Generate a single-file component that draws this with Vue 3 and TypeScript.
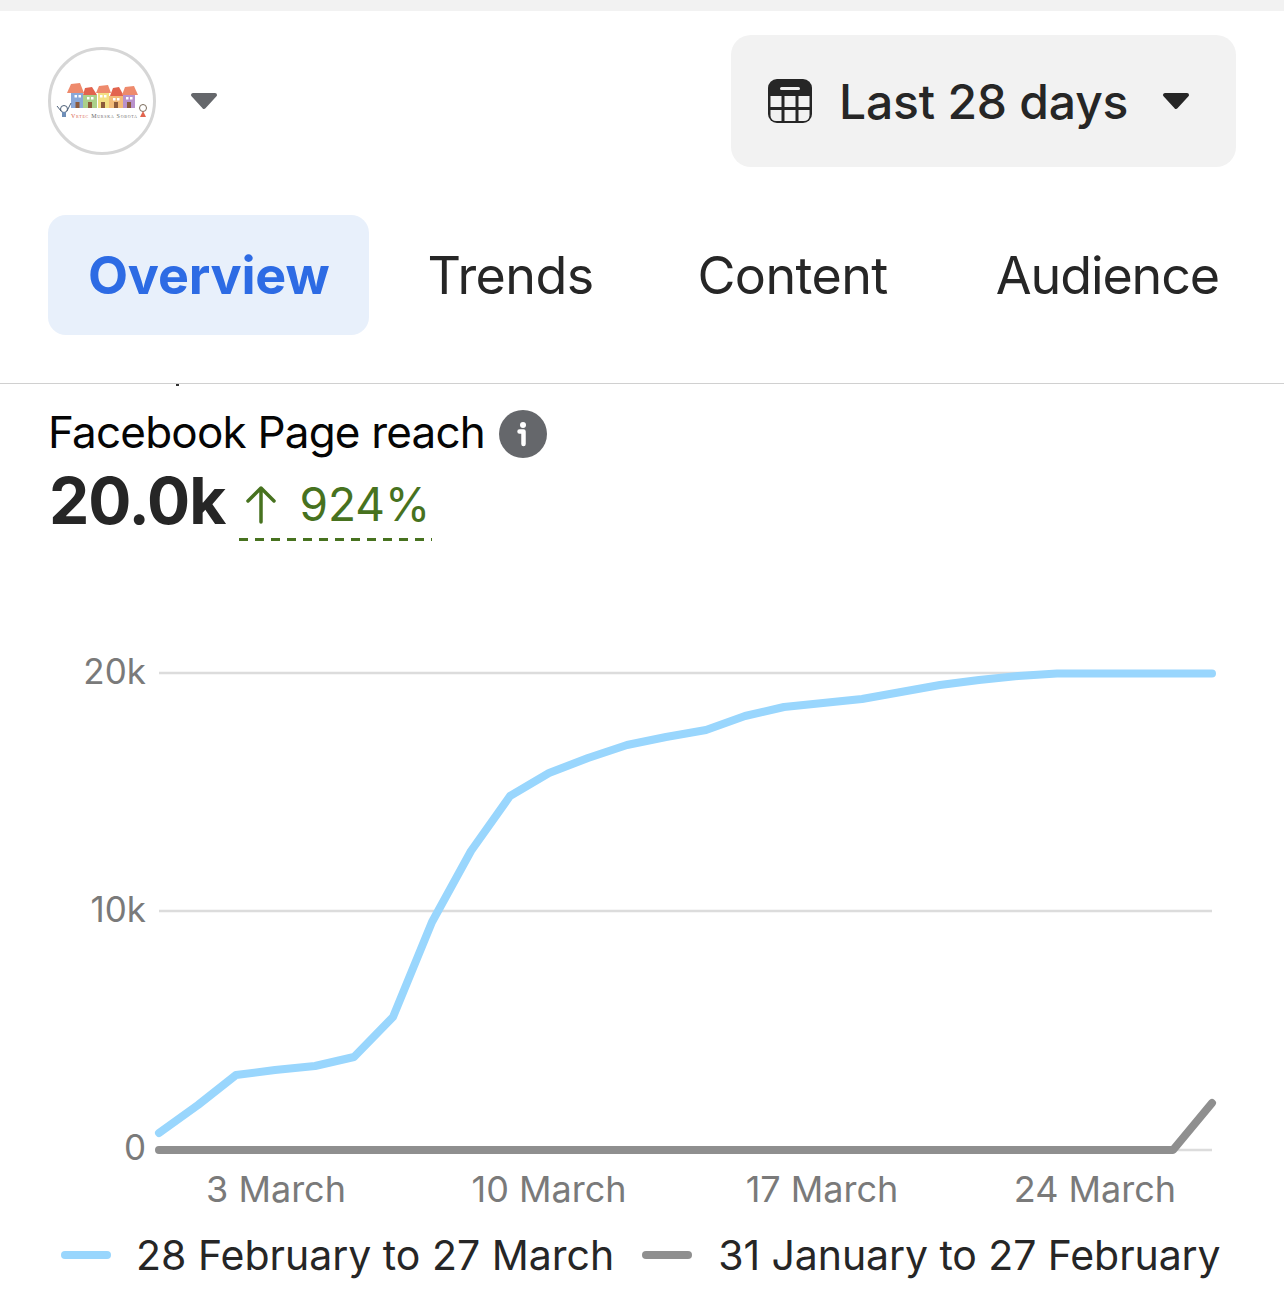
<script setup lang="ts">
const blue: [number, number][] = [[159,1133],[198,1105],[236,1075],[275,1070],[315,1066],[354,1057],[393,1017],[432,922],[471,851],[510,796],[549,773],[588,758],[627,745],[666,737],[706,730],[745,716],[784,707],[823,703],[862,699],[901,692],[940,685],[979,680],[1018,676],[1057,673.5],[1212,673.5]]
const gray: [number, number][] = [[159,1150],[1173,1150],[1212,1103]]
const top = 560
const pts = (p: [number, number][]) => p.map(([x, y]) => `${x},${y - top}`).join(' ')
const grid = [673, 911, 1150].map((y) => y - top)
const yLabels = [{ t: '20k', y: 684 - top }, { t: '10k', y: 922 - top }, { t: '0', y: 1160 - top }]
const xLabels = [{ t: '3 March', x: 276 }, { t: '10 March', x: 549 }, { t: '17 March', x: 822 }, { t: '24 March', x: 1095 }]
const tabs = ['Overview', 'Trends', 'Content', 'Audience']
const houses = [
  { roof: 'M67 93 L71 84 L80 83 L84 93Z', roofFill: '#ee8a6c', x: 71, y: 93, w: 12, h: 15, fill: '#8aa8d8', door: 75.500 },
  { roof: 'M83 95 L85 88 L92 87 L97 95Z', roofFill: '#e2644e', x: 83, y: 95, w: 14, h: 13, fill: '#abd08a', door: 88 },
  { roof: 'M96 93 L99 86 L108 85 L111 93Z', roofFill: '#ee8a6c', x: 98, y: 93, w: 11, h: 15, fill: '#f3df84', door: 101 },
  { roof: 'M110 96 L113 88 L119 87 L124 96Z', roofFill: '#e2644e', x: 109, y: 96, w: 14, h: 12, fill: '#f3bb78', door: 114 },
  { roof: 'M122 95 L125 87 L134 86 L138 95Z', roofFill: '#ee8a6c', x: 123, y: 95, w: 12, h: 13, fill: '#b892cc', door: 127 },
]
</script>

<template>
  <div class="page">
    <div class="topbar"></div>
    <header class="head">
      <div class="page-pick">
        <svg class="avatar" width="108" height="108" viewBox="48 47 108 108">
          <circle cx="102" cy="101" r="52.500" fill="#fff" stroke="#d6d6d6" stroke-width="3" />
          <g class="logo-art">
            <g v-for="h in houses" :key="h.x">
              <rect :x="h.x" :y="h.y" :width="h.w" :height="h.h" :fill="h.fill" />
              <path :d="h.roof" :fill="h.roofFill" />
              <rect :x="h.door" y="102" width="4" height="6" fill="#8c5a3a" />
              <rect :x="h.door - 1" :y="h.y + 2" width="2.500" height="2.500" fill="#fff" />
              <rect :x="h.door + 3" :y="h.y + 2" width="2.500" height="2.500" fill="#fff" />
            </g>
            <circle cx="64" cy="109" r="3.500" fill="#fff" stroke="#4c5f78" />
            <path d="M57 106 L61 111 M71 103 L67 111" stroke="#4c5f78" fill="none" />
            <rect x="62" y="112" width="4" height="5" fill="#6f8fb8" />
            <circle cx="143" cy="108" r="3.500" fill="#fff" stroke="#7a6a5a" />
            <path d="M143 111 L140 117 L146 117Z" fill="#e2644e" />
          </g>
          <text x="71" y="118" textLength="66" class="logo-text"><tspan fill="#d9604a">Vrtec</tspan> Murska Sobota</text>
        </svg>
        <svg class="caret" width="28" height="18" viewBox="0 0 28 18"><path d="M3 3h22L14 15Z" fill="#65676b" stroke="#65676b" stroke-width="4" stroke-linejoin="round" /></svg>
      </div>
      <button class="range">
        <svg width="46" height="46" viewBox="0 0 46 46">
          <rect x="1" y="1" width="44" height="44" rx="9" fill="#262626" />
          <rect x="13" y="9" width="20" height="3" rx="1.500" fill="#f2f2f2" />
          <g fill="#f2f2f2">
            <rect x="3.500" y="18" width="11" height="11" />
            <rect x="17.500" y="18" width="11" height="11" />
            <rect x="31.500" y="18" width="11" height="11" />
            <path d="M3.500 32h11v11H9a5.500 5.500 0 0 1-5.500-5.500Z" />
            <rect x="17.500" y="32" width="11" height="11" />
            <path d="M31.500 32h11v5.500a5.500 5.500 0 0 1-5.500 5.500h-5.500Z" />
          </g>
        </svg>
        <span class="range-text">Last 28 days</span>
        <svg class="range-caret" width="28" height="18" viewBox="0 0 28 18"><path d="M3 3h22L14 15Z" fill="#262626" stroke="#262626" stroke-width="4" stroke-linejoin="round" /></svg>
      </button>
    </header>

    <nav class="tabs">
      <div v-for="(t, i) in tabs" :key="t" class="tab" :class="{ active: i === 0 }">{{ t }}</div>
    </nav>

    <section class="body">
      <span class="speck"></span>
      <h2 class="title">Facebook Page reach
        <svg width="48" height="48" viewBox="0 0 48 48"><circle cx="24" cy="24" r="24" fill="#65676b" /><circle cx="24" cy="15" r="3" fill="#fff" /><path d="M20.500 21.500H24.500V34" fill="none" stroke="#fff" stroke-width="4.500" stroke-linecap="round" stroke-linejoin="round" /></svg>
      </h2>
      <div class="metric">
        <span class="value">20.0k</span>
        <span class="delta">
          <svg width="32" height="40" viewBox="0 0 32 40"><path d="M16 38V4M3 17 16 4l13 13" fill="none" stroke="#47721f" stroke-width="3.500" stroke-linecap="round" stroke-linejoin="round" /></svg>
          <span>924%</span>
        </span>
      </div>

      <svg class="chart" width="1284" height="660" viewBox="0 0 1284 660">
        <line v-for="y in grid" :key="y" x1="159" x2="1212" :y1="y" :y2="y" class="gridline" />
        <text v-for="l in yLabels" :key="l.t" x="146" :y="l.y" text-anchor="end" class="axis axis-y">{{ l.t }}</text>
        <text v-for="l in xLabels" :key="l.t" :x="l.x" y="642" text-anchor="middle" class="axis">{{ l.t }}</text>
        <polyline :points="pts(blue)" class="series blue" />
        <polyline :points="pts(gray)" class="series gray" />
      </svg>

      <div class="legend">
        <span class="swatch swatch-blue"></span><span class="legend-label">28 February to 27 March</span>
        <span class="swatch swatch-gray"></span><span class="legend-label second">31 January to 27 February</span>
      </div>
    </section>
  </div>
</template>

<style>
html, body { margin: 0; background: #fff; }
</style>

<style scoped>
.page { width: 1284px; height: 1306px; overflow: hidden; background: #fff; font-family: Inter, "Liberation Sans", sans-serif; color: #262626; }
.topbar { height: 11px; background: #f2f2f2; }
.head { display: flex; justify-content: space-between; align-items: center; padding: 24px 48px 48px; }
.page-pick { display: flex; align-items: center; gap: 34px; }
.avatar { display: block; }
.logo-art { filter: blur(0.4px); }
.logo-text { font-size: 6px; fill: #6a6a6a; font-family: "Liberation Serif", serif; font-variant: small-caps; }
.caret { display: block; }
.range { width: 505px; height: 132px; border: 0; border-radius: 20px; background: #f2f2f2; display: flex; align-items: center; padding: 0 46px 0 36px; box-sizing: border-box; font: inherit; color: inherit; }
.range-text { font-size: 48px; font-weight: 500; margin-left: 26px; letter-spacing: -0.2px; }
.range-caret { margin-left: auto; }
.tabs { display: flex; align-items: center; gap: 18px; height: 120px; padding: 0 0 48px 48px; border-bottom: 1px solid #d0d0d0; }
.tab { font-size: 52px; height: 120px; line-height: 122px; padding: 0 43px; border-radius: 18px; letter-spacing: -0.6px; white-space: nowrap; }
.tab:last-child { margin-left: 4px; letter-spacing: -1.1px; }
.tab.active { background: #e8f0fb; color: #2d6be4; font-weight: 700; padding: 0 40px; margin-right: -3px; letter-spacing: -0.2px; }
.body { position: relative; padding-top: 22px; }
.speck { position: absolute; left: 176px; top: 0; width: 3px; height: 2px; background: #333; }
.title { margin: 0; padding-left: 48px; display: flex; align-items: center; gap: 14px; font-size: 44px; line-height: 53px; font-weight: 400; color: #050505; letter-spacing: -0.8px; }
.title svg { margin-top: 2px; }
.metric { display: flex; align-items: baseline; padding-left: 49px; }
.value { font-size: 64px; font-weight: 700; line-height: 84px; letter-spacing: -1px; }
.delta { display: inline-flex; align-items: center; gap: 22px; margin-left: 14px; padding: 0 2px 9px 6px; color: #47721f; font-size: 46px; background: repeating-linear-gradient(90deg, #47721f 0 9px, transparent 9px 16px) left bottom / 100% 3px no-repeat; }
.chart { display: block; margin-top: 17px; }
.gridline { stroke: #dcdcdc; stroke-width: 2.500; }
.axis { font-size: 36px; fill: #7a7a7a; }
.axis-y { font-size: 35px; }
.series { fill: none; stroke-width: 8; stroke-linecap: round; stroke-linejoin: round; }
.blue { stroke: #99d6fd; }
.gray { stroke: #8f8f8f; }
.legend { display: flex; align-items: center; padding-left: 61px; margin-top: 10px; font-size: 41px; white-space: nowrap; }
.legend-label.second { letter-spacing: -0.08px; }
.swatch { width: 50px; height: 8px; border-radius: 4px; }
.swatch-blue { background: #99d6fd; margin-right: 25px; }
.swatch-gray { background: #8f8f8f; margin: 0 26px 0 28px; }
</style>
